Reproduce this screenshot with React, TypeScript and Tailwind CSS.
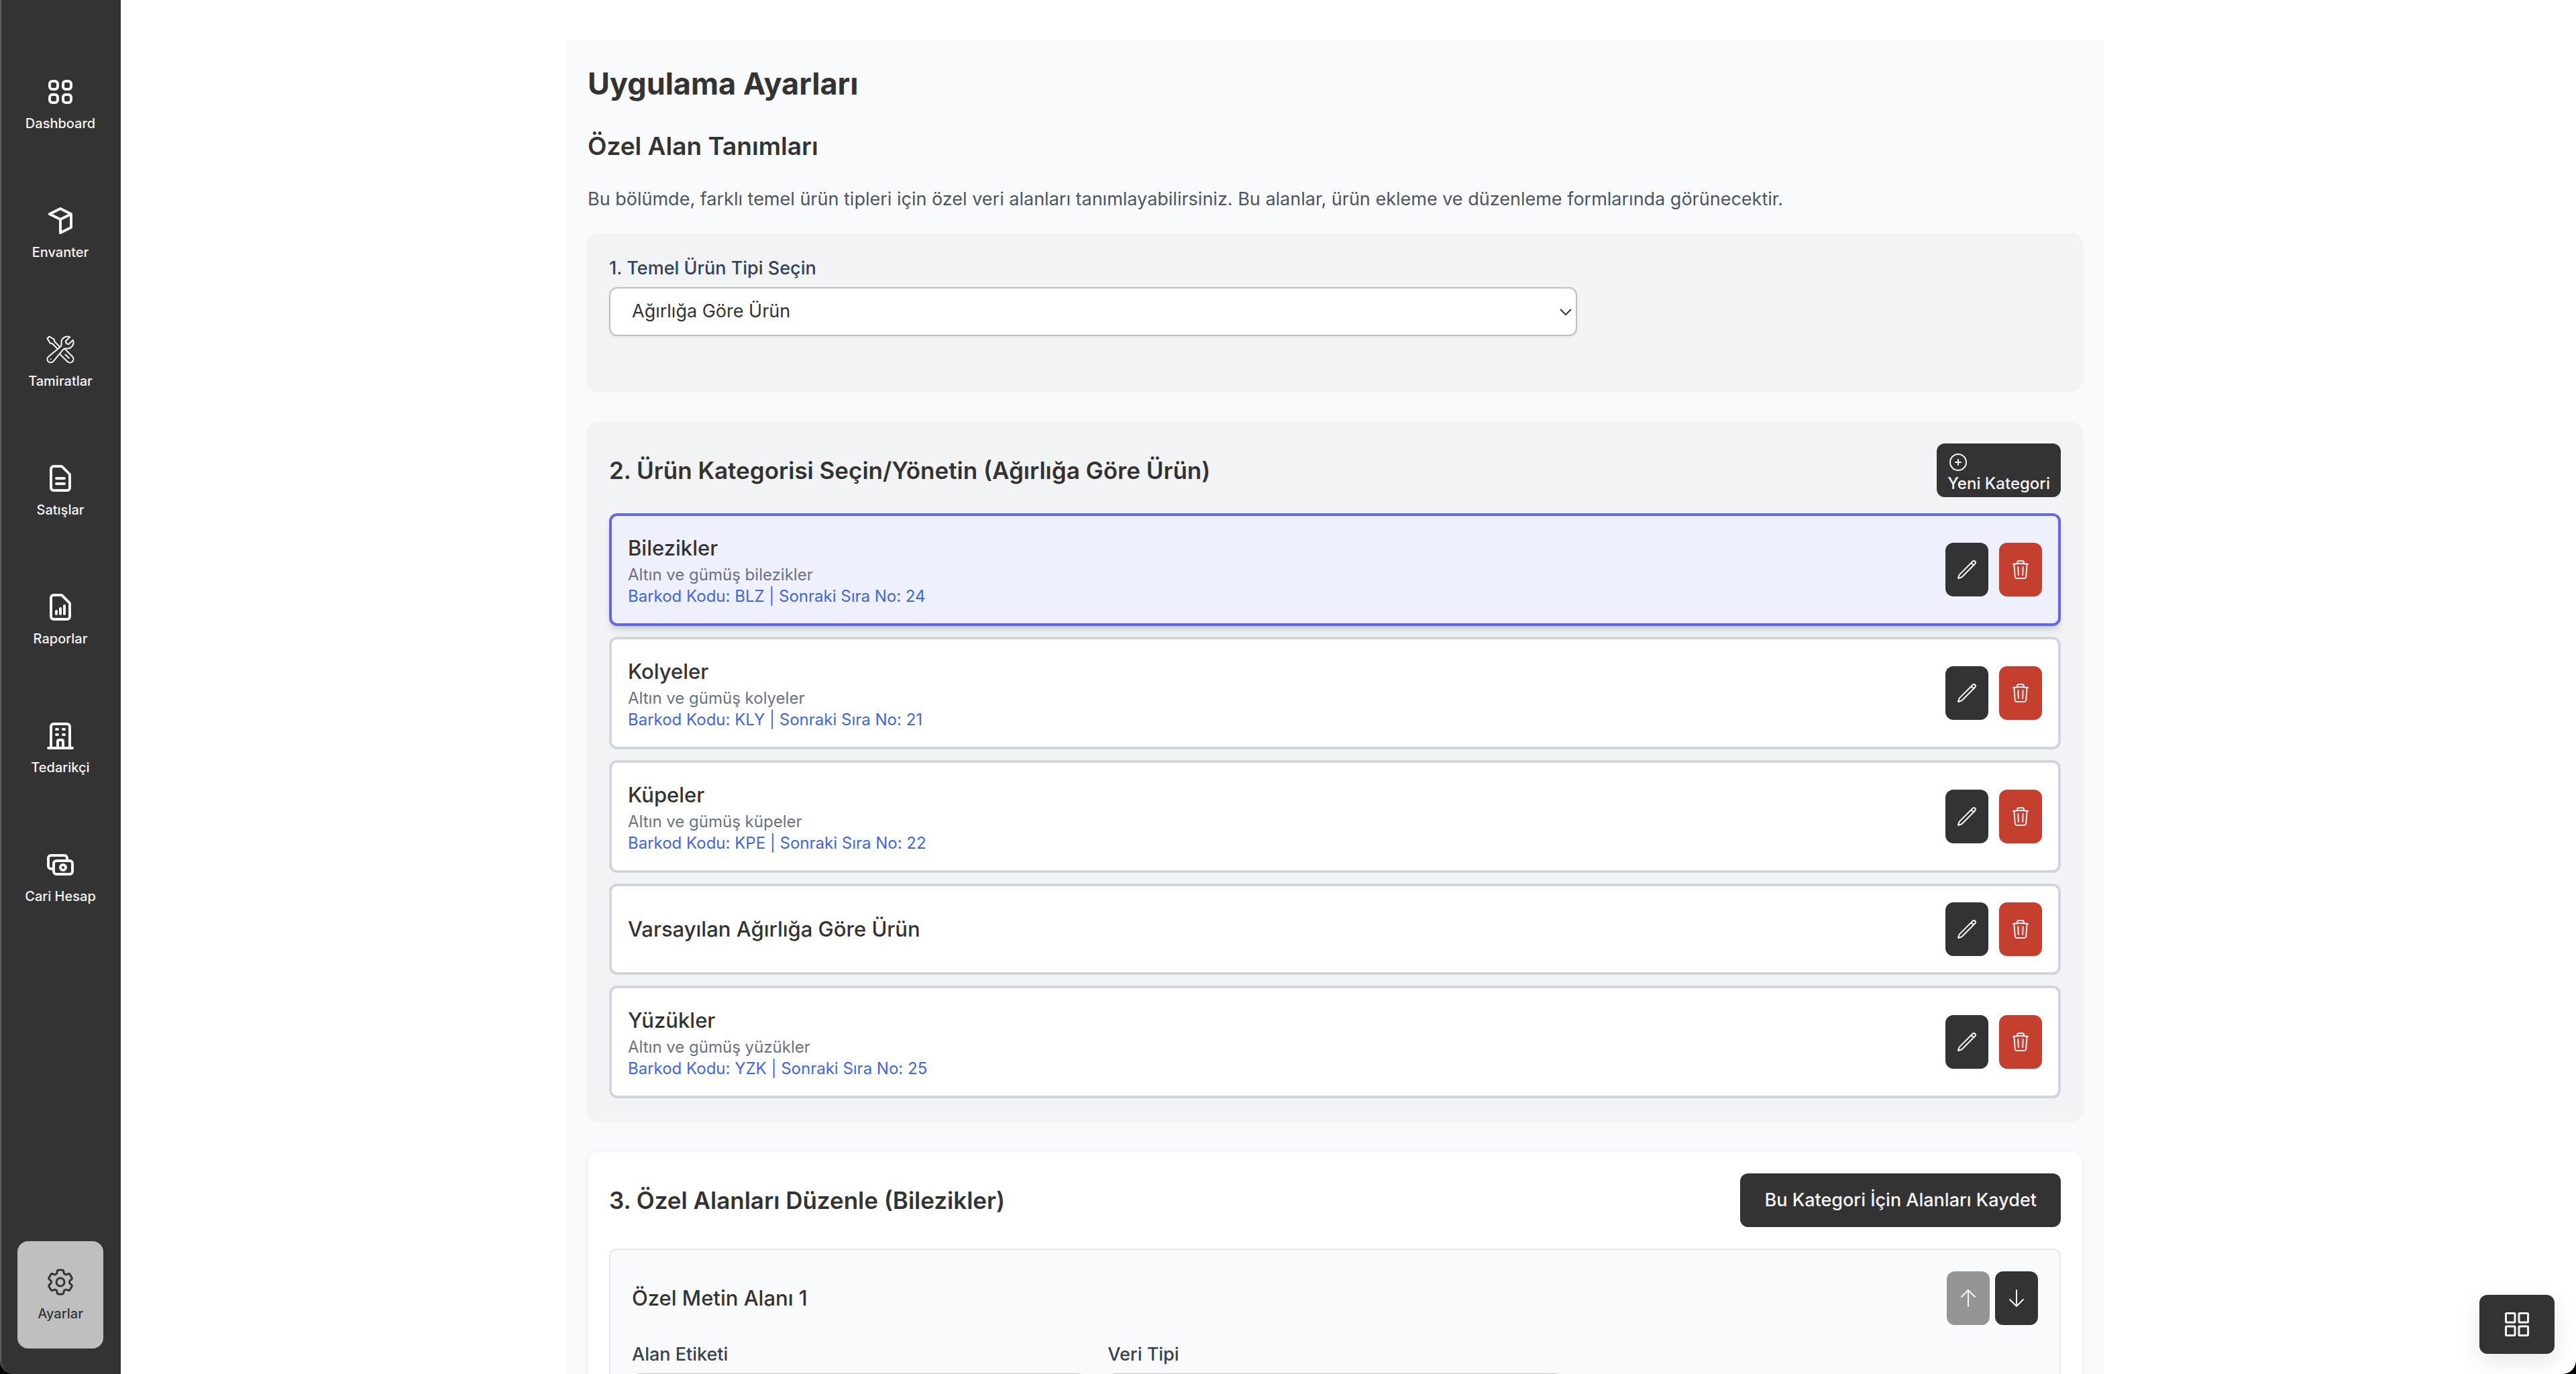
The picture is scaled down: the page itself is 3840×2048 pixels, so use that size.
import React, { useState } from "react";

/* ---------- icons ---------- */

type IconProps = { paths: string[]; strokeWidth?: number; className?: string };

function Icon({ paths, strokeWidth = 1.5, className = "size-8" }: IconProps) {
  return (
    <svg
      viewBox="0 0 24 24"
      fill="none"
      stroke="currentColor"
      strokeWidth={strokeWidth}
      strokeLinecap="round"
      strokeLinejoin="round"
      className={className}
      aria-hidden="true"
    >
      {paths.map((d) => (
        <path key={d} d={d} />
      ))}
    </svg>
  );
}

const icons = {
  dashboard: [
    "M4 6a2 2 0 012-2h2a2 2 0 012 2v2a2 2 0 01-2 2H6a2 2 0 01-2-2V6z",
    "M14 6a2 2 0 012-2h2a2 2 0 012 2v2a2 2 0 01-2 2h-2a2 2 0 01-2-2V6z",
    "M4 16a2 2 0 012-2h2a2 2 0 012 2v2a2 2 0 01-2 2H6a2 2 0 01-2-2v-2z",
    "M14 16a2 2 0 012-2h2a2 2 0 012 2v2a2 2 0 01-2 2h-2a2 2 0 01-2-2v-2z",
  ],
  box: ["M20 7l-8-4-8 4m16 0l-8 4m8-4v10l-8 4m0-10L4 7m8 4v10"],
  tools: [
    "M11.42 15.17L17.25 21A2.652 2.652 0 0021 17.25l-5.877-5.877M11.42 15.17l2.496-3.03c.317-.384.74-.626 1.208-.766M11.42 15.17l-4.655 5.653a2.548 2.548 0 11-3.586-3.586l6.837-5.63m5.108-.233c.55-.164 1.163-.188 1.743-.14a4.5 4.5 0 004.486-6.336l-3.276 3.277a3.004 3.004 0 01-2.25-2.25l3.276-3.276a4.5 4.5 0 00-6.336 4.486c.091 1.076-.071 2.264-.904 2.95l-.102.085m-1.745 1.437L5.909 7.5H4.5L2.25 3.75l1.5-1.5L7.5 4.5v1.409l4.26 4.26m-1.745 1.437l1.745-1.437m6.615 8.206L15.75 15.75M4.867 19.125h.008v.008h-.008v-.008z",
  ],
  document: [
    "M9 12h6m-6 4h6m2 5H7a2 2 0 01-2-2V5a2 2 0 012-2h5.586a1 1 0 01.707.293l5.414 5.414a1 1 0 01.293.707V19a2 2 0 01-2 2z",
  ],
  report: [
    "M9 17v-2m3 2v-4m3 4v-6m2 10H7a2 2 0 01-2-2V5a2 2 0 012-2h5.586a1 1 0 01.707.293l5.414 5.414a1 1 0 01.293.707V19a2 2 0 01-2 2z",
  ],
  building: [
    "M19 21V5a2 2 0 00-2-2H7a2 2 0 00-2 2v16m14 0h2m-2 0h-5m-9 0H3m2 0h5M9 7h1m-1 4h1m4-4h1m-1 4h1m-5 10v-5a1 1 0 011-1h2a1 1 0 011 1v5m-4 0h4",
  ],
  cash: [
    "M17 9V7a2 2 0 00-2-2H5a2 2 0 00-2 2v6a2 2 0 002 2h2m2 4h10a2 2 0 002-2v-6a2 2 0 00-2-2H9a2 2 0 00-2 2v6a2 2 0 002 2zm7-5a2 2 0 11-4 0 2 2 0 014 0z",
  ],
  cog: [
    "M9.594 3.94c.09-.542.56-.94 1.11-.94h2.593c.55 0 1.02.398 1.11.94l.213 1.281c.063.374.313.686.645.87.074.04.147.083.22.127.325.196.72.257 1.075.124l1.217-.456a1.125 1.125 0 0 1 1.37.49l1.296 2.247a1.125 1.125 0 0 1-.26 1.431l-1.003.827c-.293.241-.438.613-.43.992a7.723 7.723 0 0 1 0 .255c-.008.378.137.75.43.991l1.004.827c.424.35.534.955.26 1.43l-1.298 2.247a1.125 1.125 0 0 1-1.369.491l-1.217-.456c-.355-.133-.75-.072-1.076.124a6.47 6.47 0 0 1-.22.128c-.331.183-.581.495-.644.869l-.213 1.281c-.09.543-.56.94-1.11.94h-2.594c-.55 0-1.019-.398-1.11-.94l-.213-1.281c-.062-.374-.312-.686-.644-.87a6.52 6.52 0 0 1-.22-.127c-.325-.196-.72-.257-1.076-.124l-1.217.456a1.125 1.125 0 0 1-1.369-.49l-1.297-2.247a1.125 1.125 0 0 1 .26-1.431l1.004-.827c.292-.24.437-.613.43-.991a6.932 6.932 0 0 1 0-.255c.007-.38-.138-.751-.43-.992l-1.004-.827a1.125 1.125 0 0 1-.26-1.43l1.297-2.247a1.125 1.125 0 0 1 1.37-.491l1.216.456c.356.133.751.072 1.076-.124.072-.044.146-.086.22-.128.332-.183.582-.495.644-.869l.214-1.28Z",
    "M15 12a3 3 0 1 1-6 0 3 3 0 0 1 6 0Z",
  ],
  plusCircle: ["M12 9v6m3-3H9m12 0a9 9 0 1 1-18 0 9 9 0 0 1 18 0Z"],
  pencil: [
    "m16.862 4.487 1.687-1.688a1.875 1.875 0 1 1 2.652 2.652L6.832 19.82a4.5 4.5 0 0 1-1.897 1.13l-2.685.8.8-2.685a4.5 4.5 0 0 1 1.13-1.897L16.863 4.487Zm0 0L19.5 7.125",
  ],
  trash: [
    "m14.74 9-.346 9m-4.788 0L9.26 9m9.968-3.21c.342.052.682.107 1.022.166m-1.022-.165L18.16 19.673a2.25 2.25 0 0 1-2.244 2.077H8.084a2.25 2.25 0 0 1-2.244-2.077L4.772 5.79m14.456 0a48.108 48.108 0 0 0-3.478-.397m-12 .562c.34-.059.68-.114 1.022-.165m0 0a48.11 48.11 0 0 1 3.478-.397m7.5 0v-.916c0-1.18-.91-2.164-2.09-2.201a51.964 51.964 0 0 0-3.32 0c-1.18.037-2.09 1.022-2.09 2.201v.916m7.5 0a48.667 48.667 0 0 0-7.5 0",
  ],
  arrowUp: ["M4.5 10.5 12 3m0 0 7.5 7.5M12 3v18"],
  arrowDown: ["M19.5 13.5 12 21m0 0-7.5-7.5M12 21V3"],
};

/* ---------- sidebar ---------- */

const navItems = [
  { label: "Dashboard", paths: icons.dashboard, strokeWidth: 2 },
  { label: "Envanter", paths: icons.box, strokeWidth: 2 },
  { label: "Tamiratlar", paths: icons.tools, strokeWidth: 1 },
  { label: "Satışlar", paths: icons.document, strokeWidth: 2 },
  { label: "Raporlar", paths: icons.report, strokeWidth: 2 },
  { label: "Tedarikçi", paths: icons.building, strokeWidth: 2 },
  { label: "Cari Hesap", paths: icons.cash, strokeWidth: 2 },
];

function NavLink({
  label,
  paths,
  strokeWidth,
  active = false,
}: {
  label: string;
  paths: string[];
  strokeWidth: number;
  active?: boolean;
}) {
  return (
    <a
      href="#"
      aria-current={active ? "page" : undefined}
      className={
        "flex h-40 w-32 flex-col items-center justify-center gap-2 rounded-2xl " +
        (active ? "bg-[#bfbfbf] text-[#333333]" : "text-[#f5f5f5]")
      }
    >
      <Icon paths={paths} strokeWidth={strokeWidth} className="size-12" />
      <span className="text-[20px] leading-[30px] font-medium whitespace-nowrap">{label}</span>
    </a>
  );
}

function Sidebar() {
  return (
    <aside className="flex w-[180px] shrink-0 flex-col items-center justify-between rounded-bl-[20px] border-l-2 border-[#5e5e5e] bg-[#333333] pt-[76px] pr-[2px] pb-[38px]">
      <nav className="flex flex-col gap-8">
        {navItems.map((item) => (
          <NavLink key={item.label} {...item} />
        ))}
      </nav>
      <NavLink label="Ayarlar" paths={icons.cog} strokeWidth={1.5} active />
    </aside>
  );
}

/* ---------- category list ---------- */

type Category = { name: string; description?: string; barcode?: string };

const categories: Category[] = [
  { name: "Bilezikler", description: "Altın ve gümüş bilezikler", barcode: "Barkod Kodu: BLZ | Sonraki Sıra No: 24" },
  { name: "Kolyeler", description: "Altın ve gümüş kolyeler", barcode: "Barkod Kodu: KLY | Sonraki Sıra No: 21" },
  { name: "Küpeler", description: "Altın ve gümüş küpeler", barcode: "Barkod Kodu: KPE | Sonraki Sıra No: 22" },
  { name: "Varsayılan Ağırlığa Göre Ürün" },
  { name: "Yüzükler", description: "Altın ve gümüş yüzükler", barcode: "Barkod Kodu: YZK | Sonraki Sıra No: 25" },
];

function IconButton({ label, paths, className, disabled }: { label: string; paths: string[]; className: string; disabled?: boolean }) {
  return (
    <button
      type="button"
      aria-label={label}
      disabled={disabled}
      className={"flex h-20 w-16 items-center justify-center rounded-xl text-[#f5f5f5] " + className}
    >
      <Icon paths={paths} />
    </button>
  );
}

function CategoryRow({ category, selected }: { category: Category; selected: boolean }) {
  return (
    <li
      className={
        "flex items-center justify-between rounded-xl border-4 p-6 " +
        (selected
          ? "border-[#6366e8] bg-[#eef0fd] shadow-[0_8px_12px_-2px_rgba(0,0,0,0.12),0_4px_8px_-4px_rgba(0,0,0,0.12)]"
          : "border-[#d2d5dc] bg-white")
      }
    >
      <div>
        <h4 className="text-[31px] leading-[48px] font-medium">{category.name}</h4>
        {category.description && <p className="text-[24px] leading-8 text-gray-500">{category.description}</p>}
        {category.barcode && <p className="text-[24px] leading-8 text-[#3f66e6]">{category.barcode}</p>}
      </div>
      <div className="flex gap-4">
        <IconButton label={category.name + " düzenle"} paths={icons.pencil} className="bg-[#333333]" />
        <IconButton label={category.name + " sil"} paths={icons.trash} className="bg-[#c43f2e]" />
      </div>
    </li>
  );
}

/* ---------- page ---------- */

const labelClass = "mb-2 block text-[27px] leading-10 font-medium text-gray-700";
const controlClass =
  "h-[73px] w-full appearance-none rounded-xl border-2 border-[#bfbfbf] bg-white px-8 text-[27px] text-[#333333] shadow-[0_2px_4px_rgba(0,0,0,0.05)]";

function Select({ id, options, value, onChange }: { id: string; options: string[]; value: string; onChange: (v: string) => void }) {
  return (
    <div className="relative">
      <select id={id} value={value} onChange={(e) => onChange(e.target.value)} className={controlClass}>
        {options.map((o) => (
          <option key={o}>{o}</option>
        ))}
      </select>
      <svg
        viewBox="0 0 18 11"
        fill="none"
        stroke="#333333"
        strokeWidth="2"
        className="pointer-events-none absolute top-1/2 right-2 w-[18px] -translate-y-1/2"
        aria-hidden="true"
      >
        <path d="M1 1.5l8 8 8-8" />
      </svg>
    </div>
  );
}

export default function App() {
  const [productType, setProductType] = useState("Ağırlığa Göre Ürün");
  const [fieldLabel, setFieldLabel] = useState("Özel Metin Alanı 1");
  const [dataType, setDataType] = useState("Metin");

  return (
    <div className="h-screen overflow-hidden bg-black font-[Inter,sans-serif] text-[#333333]">
      <div className="flex h-full overflow-hidden rounded-b-[20px] bg-black">
        <Sidebar />
        <main className="min-w-0 flex-1 overflow-hidden rounded-br-[20px] bg-white pt-[60px] pr-10">
          <div className="mx-auto max-w-[2292px] bg-[#f9fafc] p-8">
            <h1 className="text-[45px] leading-[66px] font-bold">Uygulama Ayarları</h1>
            <h2 className="mt-8 text-[37px] leading-[56px] font-semibold">Özel Alan Tanımları</h2>
            <p className="mt-[30px] text-[27px] leading-[42px] text-gray-600">
              Bu bölümde, farklı temel ürün tipleri için özel veri alanları tanımlayabilirsiniz. Bu alanlar, ürün ekleme ve
              düzenleme formlarında görünecektir.
            </p>

            <section className="mt-[30px] rounded-2xl bg-[#f2f3f5] px-8 pt-8 pb-20 shadow-[0_2px_4px_rgba(0,0,0,0.05)]">
              <div className="w-2/3">
                <label htmlFor="product-type" className={labelClass}>
                  1. Temel Ürün Tipi Seçin
                </label>
                <Select id="product-type" options={["Ağırlığa Göre Ürün"]} value={productType} onChange={setProductType} />
              </div>
            </section>

            <section className="mt-12 rounded-2xl bg-[#f2f3f5] p-8 shadow-[0_2px_4px_rgba(0,0,0,0.05)]">
              <header className="mb-6 flex items-center justify-between">
                <h3 className="text-[35px] leading-[56px] font-semibold">2. Ürün Kategorisi Seçin/Yönetin (Ağırlığa Göre Ürün)</h3>
                <button
                  type="button"
                  className="flex h-20 flex-col items-start rounded-xl bg-[#333333] px-4 pt-3 text-[24px] leading-8 font-medium text-[#f5f5f5]"
                >
                  <Icon paths={icons.plusCircle} className="size-8 shrink-0" />
                  Yeni Kategori
                </button>
              </header>
              <ul className="flex flex-col gap-4">
                {categories.map((c, i) => (
                  <CategoryRow key={c.name} category={c} selected={i === 0} />
                ))}
              </ul>
            </section>

            <section className="mt-12 rounded-2xl bg-white p-8 shadow-[0_2px_6px_rgba(0,0,0,0.1)]">
              <header className="mb-8 flex items-center justify-between">
                <h3 className="text-[35px] leading-[56px] font-semibold">3. Özel Alanları Düzenle (Bilezikler)</h3>
                <button type="button" className="h-20 rounded-xl bg-[#333333] px-9 text-[27px] font-medium text-[#f5f5f5]">
                  Bu Kategori İçin Alanları Kaydet
                </button>
              </header>
              <div className="rounded-xl border-2 border-[#e5e6ea] bg-[#f9fafc] p-8">
                <div className="mb-6 flex items-center justify-between">
                  <h4 className="text-[31px] leading-[48px] font-medium">Özel Metin Alanı 1</h4>
                  <div className="flex gap-2">
                    <IconButton label="Yukarı taşı" paths={icons.arrowUp} className="bg-[#333333] opacity-50" disabled />
                    <IconButton label="Aşağı taşı" paths={icons.arrowDown} className="bg-[#333333]" />
                  </div>
                </div>
                <div className="grid grid-cols-3 gap-8">
                  <div>
                    <label htmlFor="field-label" className={labelClass}>
                      Alan Etiketi
                    </label>
                    <input id="field-label" value={fieldLabel} onChange={(e) => setFieldLabel(e.target.value)} className={controlClass} />
                  </div>
                  <div>
                    <label htmlFor="data-type" className={labelClass}>
                      Veri Tipi
                    </label>
                    <Select id="data-type" options={["Metin"]} value={dataType} onChange={setDataType} />
                  </div>
                </div>
              </div>
            </section>
          </div>
        </main>
      </div>

      <button
        type="button"
        aria-label="Hızlı menü"
        className="fixed right-8 bottom-[30px] flex h-[88px] w-28 items-center justify-center rounded-xl bg-[#333333] text-[#f5f5f5] shadow-[0_12px_36px_rgba(0,0,0,0.1)]"
      >
        <svg viewBox="0 0 36 36" fill="none" stroke="currentColor" strokeWidth="3" strokeLinejoin="round" className="size-9" aria-hidden="true">
          <rect x="1.5" y="1.5" width="13.5" height="13.5" rx="1" />
          <rect x="21" y="1.5" width="13.5" height="13.5" rx="1" />
          <rect x="1.5" y="21" width="13.5" height="13.5" rx="1" />
          <rect x="21" y="21" width="13.5" height="13.5" rx="1" />
        </svg>
      </button>
    </div>
  );
}
